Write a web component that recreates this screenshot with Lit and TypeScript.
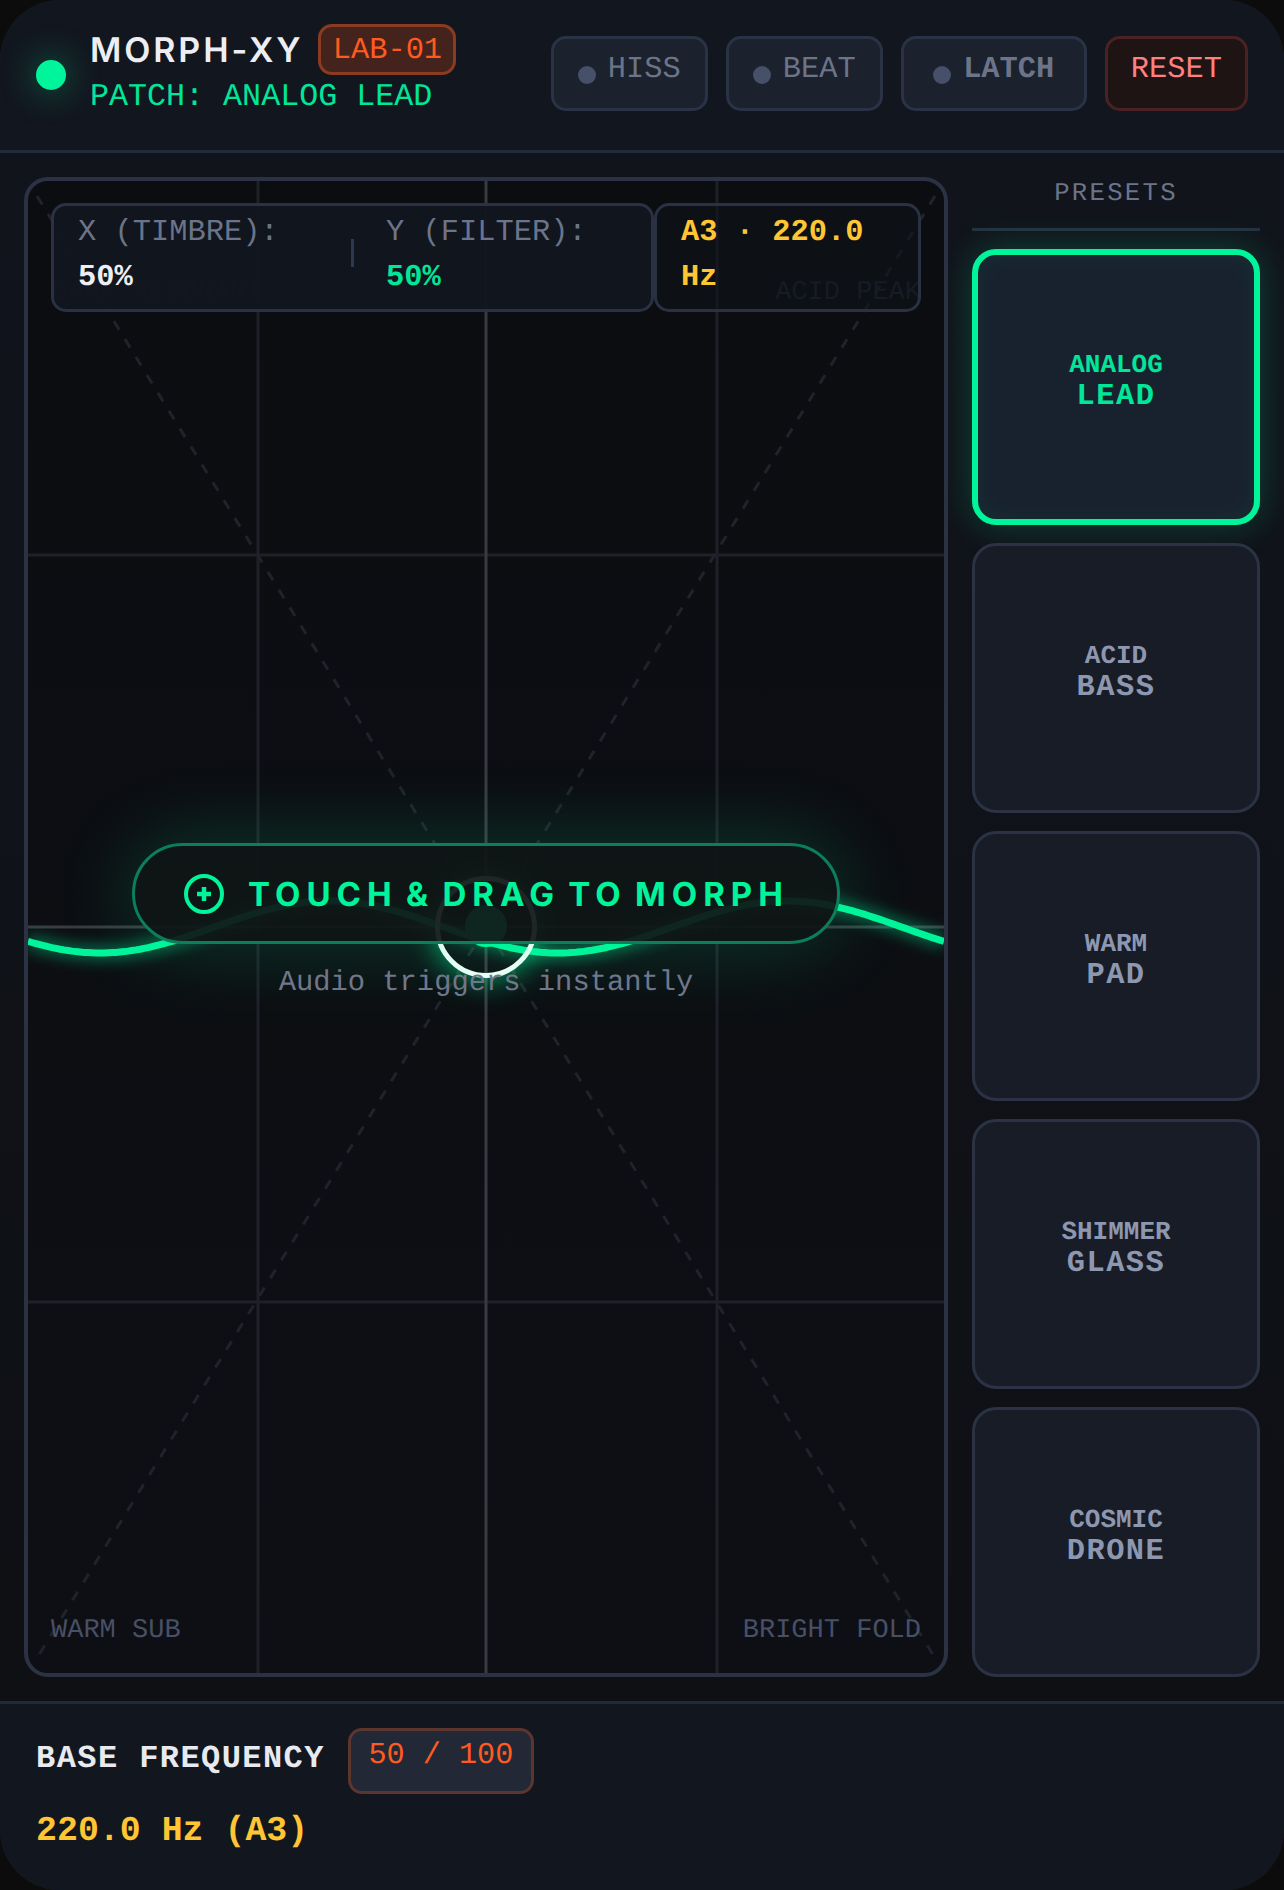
import { LitElement, html, css } from "lit";
import { customElement } from "lit/decorators.js";

function wave(): string {
  const pts: string[] = [];
  for (let x = 0; x <= 916; x += 4) {
    const X = x + 28;
    const y = 927 - 181 + 26 * Math.cos((2 * Math.PI * (X - 100)) / 458);
    pts.push(`${x},${y.toFixed(1)}`);
  }
  return pts.join(" ");
}

const PRESETS = [
  ["ANALOG", "LEAD", true],
  ["ACID", "BASS", false],
  ["WARM", "PAD", false],
  ["SHIMMER", "GLASS", false],
  ["COSMIC", "DRONE", false],
] as const;

@customElement("app-root")
export class AppRoot extends LitElement {
  static styles = css`
    :host { display: block; width: 1284px; height: 1890px; background: #0c0c0c; font-family: "Liberation Mono", monospace; overflow: hidden; text-rendering: geometricPrecision; }
    *, *::before, *::after { box-sizing: border-box; }
    .shell { width: 1284px; height: 1890px; border-radius: 60px; overflow: hidden; display: grid; grid-template-rows: 153px 1548px 189px;
      background: #10131b; box-shadow: inset 0 0 0 2px #1c1d20; }
    header { display: flex; align-items: flex-start; border-bottom: 3px solid #222a38; padding: 36px 36px 0; background: #12161f; }
    .led { width: 30px; height: 30px; border-radius: 50%; background: #00f59b; box-shadow: 0 0 36px rgba(0,245,155,.45); margin-top: 24px; margin-right: 24px; flex: none; }
    .brand { flex: 1; margin-top: -12px; }
    .title-row { display: flex; align-items: center; gap: 15px; height: 51px; }
    .title { font-family: Inter, sans-serif; font-weight: 600; font-size: 34px; letter-spacing: 2.9px; color: #eceef3; line-height: 51px; margin-top: 2px; }
    .badge { height: 51px; width: 138px; border: 3px solid #8a3b20; background: #44231c; color: #ff5a1f; border-radius: 14px; font-size: 30.4px; line-height: 49px; text-align: center; }
    .patch { font-size: 31.7px; color: #00e69a; line-height: 42px; margin-top: 1px; }
    .btns { display: flex; gap: 18px; }
    .btn { height: 75px; border: 3px solid #2a3346; border-radius: 15px; background: #1b212d; color: #6b7488; font-size: 30.4px; padding: 0 24px; display: flex; align-items: flex-start; gap: 12px; line-height: 62px; }
    .btn i { width: 18px; height: 18px; border-radius: 50%; background: #475069; margin-top: 27px; flex: none; }
    .btn.latch { padding: 0 29.5px; font-weight: 700; }
    .btn.reset { background: #1f1414; border-color: #4c2124; color: #ff8080; padding: 0 23px; }
    main { display: grid; grid-template-columns: 924px 288px; gap: 24px; padding: 24px; background: linear-gradient(180deg, #11141c, #0e1014); min-height: 0; }
    .pad { position: relative; border: 4px solid #2a3244; border-radius: 24px; overflow: hidden; background: linear-gradient(180deg, #0c0d11, #0d0f14); }
    .pad svg.grid, .pad svg.wave { position: absolute; left: 0; top: 0; width: 916px; height: 1492px; }
    .corner { position: absolute; font-size: 27px; color: #475066; line-height: 34px; }
    .corner.tl { left: 24px; top: 95px; color: #232833; }
    .corner.tr { right: 23px; top: 95px; color: #232833; }
    .corner.bl { left: 23px; bottom: 25px; }
    .corner.br { right: 23px; bottom: 25px; }
    .hud { position: absolute; left: 23px; right: 23px; top: 22px; height: 109px; display: flex; font-size: 30.4px; line-height: 45px; }
    .hud > div { border: 3px solid #293142; border-radius: 15px; height: 109px; padding: 5px 24px 0; }
    .hud-l { width: 603px; background: rgba(18,22,31,.96); display: grid; grid-template-columns: 241px 3px 240px; gap: 32px; color: #6b7488; flex: none; }
    .hud-l b { display: block; color: #eceef3; }
    .hud-l b.g { color: #00e69a; }
    .sep { width: 3px; height: 28px; background: #2e3950; align-self: start; margin-top: 28px; }
    .hud-r { width: 267px; background: rgba(15,18,25,.6); color: #ffc533; font-weight: 700; flex: none; }
    .ring { position: absolute; left: 458px; top: 746px; width: 0; height: 0; }
    .ring::before { content: ""; position: absolute; left: -51px; top: -51px; width: 102px; height: 102px; border-radius: 50%; border: 5px solid #f2fff9; box-shadow: 0 0 30px rgba(0,245,155,.7); }
    .ring::after { content: ""; position: absolute; left: -21px; top: -22px; width: 42px; height: 42px; border-radius: 50%; background: #00f59b; }
    .pill { position: absolute; left: 104px; top: 662px; width: 708px; height: 101px; border: 3px solid #0b7f5b; border-radius: 51px; background: rgba(15,22,21,.93); box-shadow: 0 0 80px rgba(0,245,155,.2); display: flex; align-items: center; padding-left: 49px; gap: 24px; }
    .pill span { font-family: Inter, sans-serif; font-weight: 700; font-size: 33px; letter-spacing: 6px; word-spacing: -5.5px; color: #00f59b; white-space: pre; }
    .sub { position: absolute; left: 0; right: 0; top: 782px; text-align: center; font-size: 28.8px; line-height: 40px; color: #70778a; }
    aside { display: flex; flex-direction: column; gap: 18px; min-height: 0; }
    .ph { height: 54px; flex: none; border-bottom: 3px solid #263040; text-align: center; font-size: 25.6px; letter-spacing: 2.3px; color: #6b7488; line-height: 34px; }
    .preset { flex: 1 1 auto; border: 3px solid #2a3244; border-radius: 24px; background: #171c26; color: #8d97b0; display: flex; flex-direction: column; align-items: center; justify-content: center; font-weight: 700; text-align: center; padding-bottom: 11px; }
    .preset.on { border: 6px solid #00f59b; background: #18222e; color: #00e69a; box-shadow: 0 0 36px rgba(0,245,155,.22), inset 0 0 24px rgba(0,245,155,.06); }
    .preset .a { font-size: 26px; line-height: 30px; }
    .preset .b { font-size: 30.4px; letter-spacing: 1.5px; line-height: 34px; }
    footer { border-top: 3px solid #222a38; background: #12161f; padding: 24px 36px 0; }
    .f1 { display: flex; align-items: flex-start; gap: 23px; }
    .f1 b { font-size: 32px; letter-spacing: 1.43px; color: #e8eaf0; line-height: 48px; margin-top: 7px; white-space: nowrap; }
    .chip { width: 186px; height: 66px; border: 3px solid #5c352f; border-radius: 14px; background: #222836; color: #ff5a1f; font-size: 30.2px; line-height: 50px; text-align: center; }
    .f2 { font-size: 34.9px; font-weight: 700; color: #ffc533; line-height: 48px; margin-top: 14px; }
  `;

  render() {
    return html`<div class="shell">
      <header>
        <div class="led"></div>
        <div class="brand">
          <div class="title-row"><span class="title">MORPH-XY</span><span class="badge">LAB-01</span></div>
          <div class="patch">PATCH: ANALOG LEAD</div>
        </div>
        <div class="btns">
          <div class="btn"><i></i>HISS</div>
          <div class="btn"><i></i>BEAT</div>
          <div class="btn latch"><i></i>LATCH</div>
          <div class="btn reset">RESET</div>
        </div>
      </header>
      <main>
        <div class="pad">
          <svg class="grid" viewBox="0 0 916 1492">
            <g stroke="#1e2128" stroke-width="3">
              <line x1="230" y1="0" x2="230" y2="1492"/>
              <line x1="689" y1="0" x2="689" y2="1492"/>
              <line x1="0" y1="374" x2="916" y2="374"/>
              <line x1="0" y1="1121" x2="916" y2="1121"/>
            </g>
            <g stroke="#383b42" stroke-width="3">
              <line x1="458" y1="0" x2="458" y2="1492"/>
              <line x1="0" y1="746" x2="916" y2="746"/>
            </g>
            <g stroke="#20232b" stroke-width="3" stroke-dasharray="10 11">
              <line x1="9" y1="15" x2="907" y2="1477"/>
              <line x1="907" y1="15" x2="9" y2="1477"/>
            </g>
          </svg>
          <span class="corner tl">DARK RESONANT</span>
          <span class="corner tr">ACID PEAK</span>
          <span class="corner bl">WARM SUB</span>
          <span class="corner br">BRIGHT FOLD</span>
          <svg class="wave" viewBox="0 0 916 1492" fill="none">
            <polyline points=${wave()} stroke="#00f59b" stroke-width="16" opacity=".35" style="filter:blur(7px)"/>
            <polyline points=${wave()} stroke="#00f59b" stroke-width="7"/>
          </svg>
          <div class="ring"></div>
          <div class="hud">
            <div class="hud-l">
              <div>X (TIMBRE):<b>50%</b></div>
              <div class="sep"></div>
              <div>Y (FILTER):<b class="g">50%</b></div>
            </div>
            <div class="hud-r">A3 · 220.0 Hz</div>
          </div>
          <div class="pill">
            <svg width="40" height="40" viewBox="0 0 40 40" fill="none" stroke="#00f59b">
              <circle cx="20" cy="20" r="18" stroke-width="4"/>
              <path d="M20 13v14M13 20h14" stroke-width="4.5"/>
            </svg>
            <span>TOUCH & DRAG TO MORPH</span>
          </div>
          <div class="sub">Audio triggers instantly</div>
        </div>
        <aside>
          <div class="ph">PRESETS</div>
          ${PRESETS.map(
            ([a, b, on]) => html`<div class="preset ${on ? "on" : ""}"><span class="a">${a}</span><span class="b">${b}</span></div>`
          )}
        </aside>
      </main>
      <footer>
        <div class="f1"><b>BASE FREQUENCY</b><div class="chip">50 / 100</div></div>
        <div class="f2">220.0 Hz (A3)</div>
      </footer>
    </div>`;
  }
}
